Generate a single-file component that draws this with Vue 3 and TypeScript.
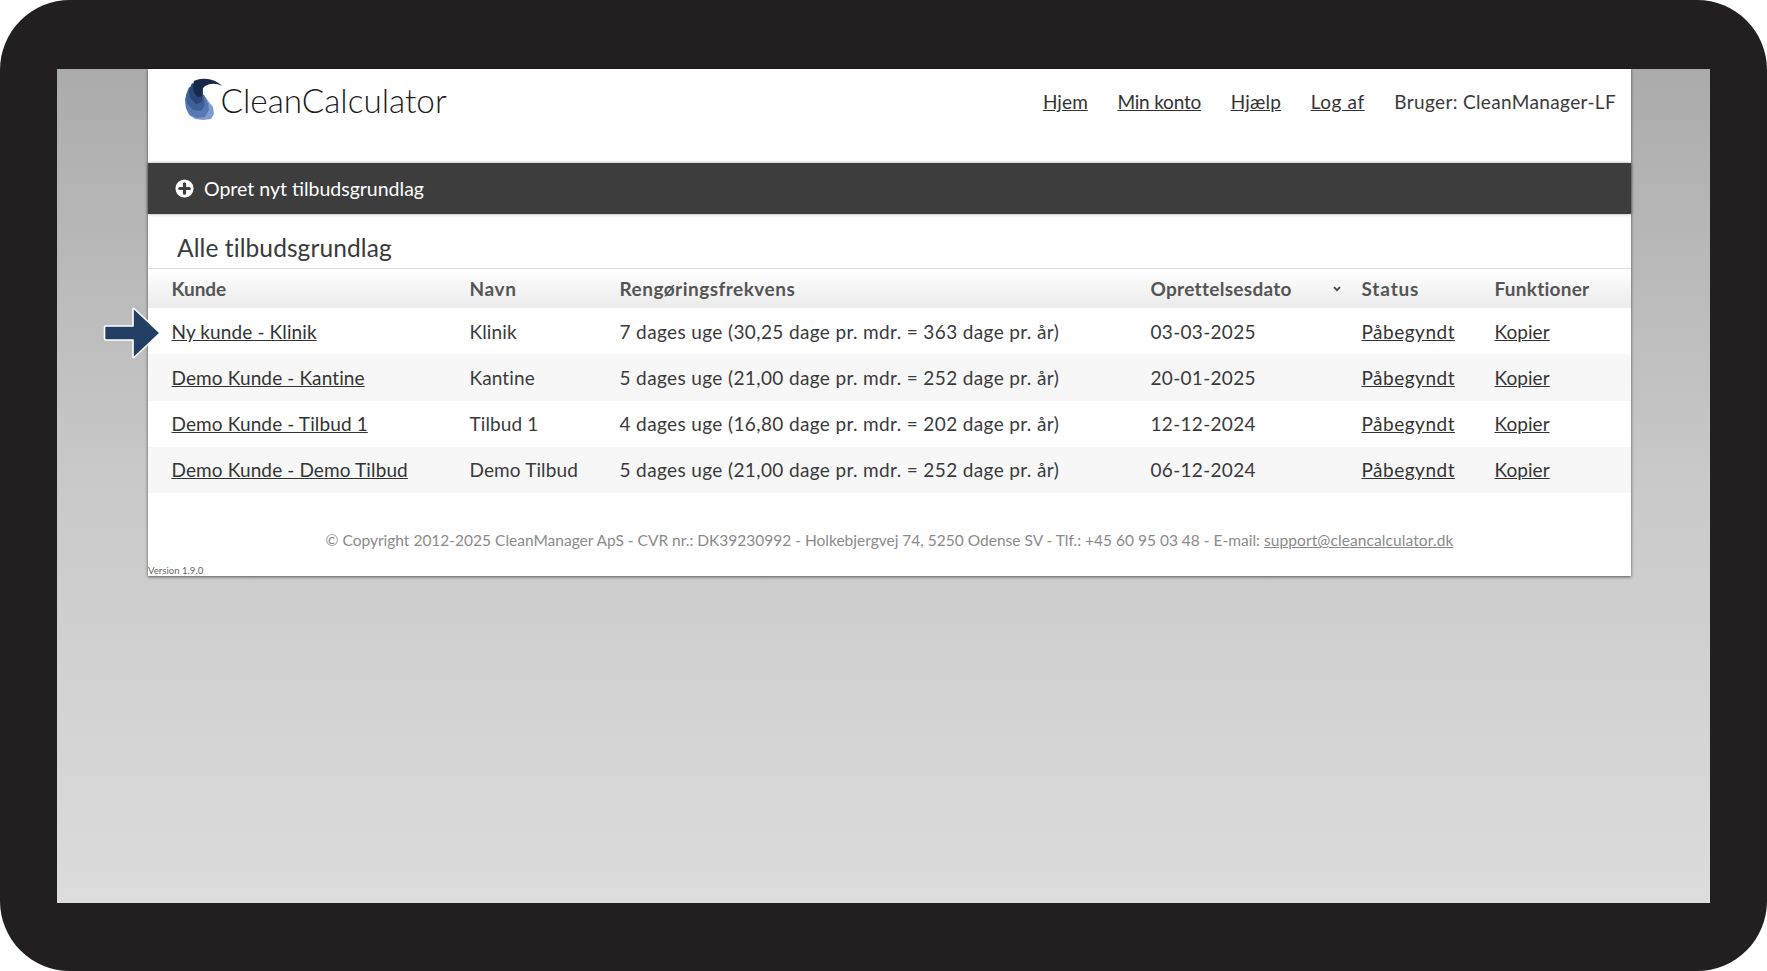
<script setup lang="ts">
interface Row { kunde: string; navn: string; freq: string; dato: string }
const rows: Row[] = [
  { kunde: 'Ny kunde - Klinik', navn: 'Klinik', freq: '7 dages uge (30,25 dage pr. mdr. = 363 dage pr. år)', dato: '03-03-2025' },
  { kunde: 'Demo Kunde - Kantine', navn: 'Kantine', freq: '5 dages uge (21,00 dage pr. mdr. = 252 dage pr. år)', dato: '20-01-2025' },
  { kunde: 'Demo Kunde - Tilbud 1', navn: 'Tilbud 1', freq: '4 dages uge (16,80 dage pr. mdr. = 202 dage pr. år)', dato: '12-12-2024' },
  { kunde: 'Demo Kunde - Demo Tilbud', navn: 'Demo Tilbud', freq: '5 dages uge (21,00 dage pr. mdr. = 252 dage pr. år)', dato: '06-12-2024' },
]
const nav: string[] = ['Hjem', 'Min konto', 'Hjælp', 'Log af']
</script>

<template>
  <div class="frame">
    <div class="screen">
      <div class="card">
        <header class="top">
          <div class="brand">
            <svg class="logo" viewBox="0 0 40 42" width="40" height="42">
              <path d="M4 13 L1 21 L2 30 L5 37 L11 41 L19 42 L27 41 L30 36 L29 29 L25 24 L20 17 Z" fill="#7f9ccd"/>
              <path d="M4 13 L1 21 L2 30 L6 37 L13 40 L21 39 L25 32 L24 25 L20 17 Z" fill="#5878b5"/>
              <path d="M5 9 L2 17 L3 26 L9 32 L17 33 L21 27 L20 20 L18 14 Z" fill="#3f6097"/>
              <path d="M8 5 L5 12 L6 20 L12 26 L18 24 L19 17 L19 11 Z" fill="#2b4775"/>
              <path d="M10 3 C8 9 9 15 14 19 L18 18 C17 14 18 11 20 9 C25 5 32 5 38 8 C33 2 20 -2 10 3 Z" fill="#16294a"/>
            </svg>
            <span class="brand-name">CleanCalculator</span>
          </div>
          <nav class="nav">
            <a v-for="n in nav" :key="n" href="#" class="link">{{ n }}</a>
            <span>Bruger: CleanManager-LF</span>
          </nav>
        </header>
        <div class="bar">
          <svg class="plus" viewBox="0 0 20 20" width="19" height="19">
            <circle cx="10" cy="10" r="9.5" fill="#fff"/>
            <path d="M10 5v10M5 10h10" stroke="#3d3d3d" stroke-width="3.4" stroke-linecap="round"/>
          </svg>
          <span>Opret nyt tilbudsgrundlag</span>
        </div>
        <h1 class="title">Alle tilbudsgrundlag</h1>
        <div class="table">
          <div class="row head">
            <span>Kunde</span>
            <span>Navn</span>
            <span>Rengøringsfrekvens</span>
            <span class="sorted">Oprettelsesdato
              <svg viewBox="0 0 8 6" width="8" height="6"><path d="M1 1.2l3 3 3-3" fill="none" stroke="#444" stroke-width="1.8"/></svg>
            </span>
            <span>Status</span>
            <span>Funktioner</span>
          </div>
          <div v-for="r in rows" :key="r.kunde" class="row body">
            <a href="#" class="link">{{ r.kunde }}</a>
            <span>{{ r.navn }}</span>
            <span>{{ r.freq }}</span>
            <span>{{ r.dato }}</span>
            <a href="#" class="link">Påbegyndt</a>
            <a href="#" class="link">Kopier</a>
          </div>
          <svg class="arrow" viewBox="0 0 60 52" width="60" height="52">
            <path d="M31 1.5 L57 26 L31 50.5 Q30 51 30 49.5 L30 33 L3 33 Q1.5 33 1.5 31.5 L1.5 20.5 Q1.5 19 3 19 L30 19 L30 2.5 Q30 1 31 1.5 Z" fill="#243f66" stroke="#fff" stroke-width="1.6" stroke-linejoin="round"/>
          </svg>
        </div>
        <footer class="foot">© Copyright 2012-2025 CleanManager ApS - CVR nr.: DK39230992 - Holkebjergvej 74, 5250 Odense SV - Tlf.: +45 60 95 03 48 - E-mail: <a href="#" class="foot-link">support@cleancalculator.dk</a></footer>
        <div class="version">Version 1.9.0</div>
      </div>
    </div>
  </div>
</template>

<style>
html, body { margin: 0; background: #fff; }
</style>

<style scoped>
.frame {
  width: 1767px;
  height: 971px;
  box-sizing: border-box;
  padding: 69px 57px 68px;
  background: #231f20;
  border-radius: 70px;
  font-family: Lato, "Noto Sans", sans-serif;
  color: #3a3a3a;
}
.screen {
  height: 100%;
  padding: 0 79px 0 91px;
  background: linear-gradient(180deg, #ababab 0%, #c9c9c9 50%, #dcdcdc 100%);
}
.card {
  position: relative;
  display: flex;
  flex-direction: column;
  height: 507px;
  background: #fff;
  box-shadow: 0 1px 3px rgba(0, 0, 0, 0.6);
}
.top {
  display: flex;
  justify-content: space-between;
  height: 94px;
  box-sizing: border-box;
  padding: 9px 15px 0 36px;
}
.brand { display: flex; align-items: flex-start; gap: 0; }
.brand-name {
  margin-top: 2px;
  margin-left: -3.5px;
  font-size: 33.3px;
  font-weight: 300;
  color: #1c1c1c;
  line-height: 40px;
}
.nav {
  display: flex;
  gap: 29.6px;
  padding-top: 13px;
  font-size: 19px;
  letter-spacing: 0.35px;
  line-height: 22px;
}
.nav .link:nth-child(1) { letter-spacing: 0.1px; }
.nav .link:nth-child(2) { letter-spacing: -0.2px; }
.nav .link:nth-child(3) { letter-spacing: 0.2px; }
.nav .link:nth-child(4) { letter-spacing: 0.6px; }
.link { color: #333; text-decoration: underline; }
.bar {
  display: flex;
  align-items: center;
  gap: 10px;
  height: 51px;
  padding-left: 27px;
  background: #3d3d3d;
  color: #fff;
  font-size: 19.5px;
  box-shadow: 0 0 3px rgba(0, 0, 0, 0.4);
}
.title {
  margin: 0;
  height: 54px;
  padding: 18.5px 0 0 29px;
  box-sizing: border-box;
  font-size: 24.5px;
  letter-spacing: 0.1px;
  font-weight: 400;
  line-height: 30px;
  color: #3a3a3a;
}
.table { position: relative; }
.row {
  display: grid;
  grid-template-columns: 298px 150px 531px 211px 133px 1fr;
  align-items: center;
  padding-left: 23.5px;
  font-size: 19px;
  letter-spacing: 0.37px;
}
.row > :nth-child(1), .row > :nth-child(2) { letter-spacing: 0.12px; }
.row > :nth-child(4) { letter-spacing: 0.3px; }
.row > :nth-child(5) { letter-spacing: 0.5px; }
.row > :nth-child(6) { letter-spacing: 0.05px; }
.head {
  height: 40px;
  box-sizing: border-box;
  border-top: 1px solid #dcdcdc;
  background: linear-gradient(180deg, #fff, #ebebeb);
  font-weight: 700;
  color: #555;
}
.head > :nth-child(1) { letter-spacing: -0.05px; }
.head > :nth-child(2) { letter-spacing: 0.6px; }
.head > :nth-child(3) { letter-spacing: 0.48px; }
.head > :nth-child(4) { letter-spacing: 0.3px; }
.head > :nth-child(5) { letter-spacing: 0.85px; }
.head > :nth-child(6) { letter-spacing: 0.25px; }
.sorted { display: flex; justify-content: space-between; padding-right: 21px; align-items: center; }
.body { height: 46.25px; background: #fff; }
.body:nth-child(odd) { background: #f7f7f7; }
.arrow { position: absolute; left: -45px; top: 39px; }
.foot {
  margin-top: 37px;
  text-align: center;
  font-size: 15.5px;
  line-height: 20px;
  color: #8a8a8a;
}
.foot-link { color: #8a8a8a; text-decoration: underline; letter-spacing: 0.1px; }
.version {
  position: absolute;
  left: 0;
  bottom: 0;
  font-size: 9.6px;
  color: #666;
}
</style>
